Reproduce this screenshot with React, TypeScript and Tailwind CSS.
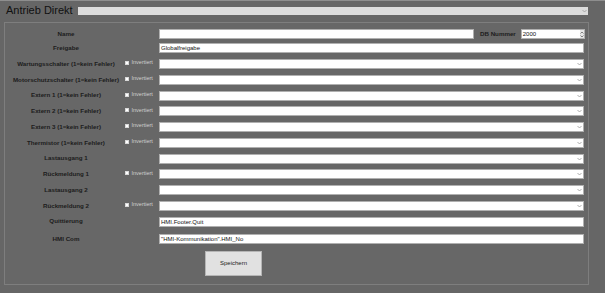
const rows = [
  { label: "Wartungsschalter (1=kein Fehler)", invert: true },
  { label: "Motorschutzschalter (1=kein Fehler)", invert: true },
  { label: "Extern 1 (1=kein Fehler)", invert: true },
  { label: "Extern 2 (1=kein Fehler)", invert: true },
  { label: "Extern 3 (1=kein Fehler)", invert: true },
  { label: "Thermistor (1=kein Fehler)", invert: true },
  { label: "Lastausgang 1", invert: false },
  { label: "Rückmeldung 1", invert: true },
  { label: "Lastausgang 2", invert: false },
  { label: "Rückmeldung 2", invert: true },
];

const Chevron = () => (
  <svg width="5" height="4" viewBox="0 0 5 4" className="mr-[1px]">
    <path d="M0.5 1 L2.5 3 L4.5 1" fill="none" stroke="#9a9a9a" strokeWidth="0.8" />
  </svg>
);

const Label = ({ text }: { text: string }) => (
  <div className="ml-[3px] w-[116px] shrink-0 text-center text-[6.2px] font-bold leading-none whitespace-nowrap text-[#1c1c1c]">
    {text}
  </div>
);

const Invert = ({ show }: { show: boolean }) => (
  <div className="flex w-[35px] shrink-0 items-center -mt-[2px]">
    {show && (
      <>
        <span className="ml-[1px] h-[4px] w-[4px] border border-[#d8d8d8] bg-white" />
        <span className="ml-[2.5px] text-[5.5px] leading-none text-[#d0d0d0]">Invertiert</span>
      </>
    )}
  </div>
);

const TextBox = ({ value, w = "w-[425px]" }: { value: string; w?: string }) => (
  <div
    className={`${w} flex h-[10px] shrink-0 items-center border border-[#b0b0b0] bg-white pl-[1px] text-[6px] leading-none text-[#111]`}
  >
    {value}
  </div>
);

const Select = () => (
  <div className="flex h-[10px] w-[425px] shrink-0 items-center justify-end border border-[#b0b0b0] bg-white">
    <Chevron />
  </div>
);

export default function App() {
  return (
    <div className="h-[293px] w-[605px] overflow-hidden border-t border-[#8e8e8e] bg-[#666666] font-['Liberation_Sans',Arial,sans-serif]">
      <div className="flex h-[19px] items-center">
        <span className="ml-[6px] text-[11px] leading-none text-[#111]">Antrieb Direkt</span>
        <div className="ml-[5px] flex h-[8px] w-[510px] items-center justify-end bg-[#dcdcdc]">
          <Chevron />
        </div>
      </div>

      <div className="ml-[4px] mt-[2px] h-[263px] w-[585px] border border-[#7e7e7e] bg-[#676767]">
        <div className="flex flex-col pt-[6px]">
          <div className="flex h-[10px] items-center">
            <Label text="Name" />
            <div className="w-[35px] shrink-0" />
            <TextBox value="" w="w-[315px]" />
            <span className="ml-[6px] text-[6.2px] font-bold leading-none text-[#1c1c1c]">DB Nummer</span>
            <div className="ml-[5px] flex h-[10px] w-[64px] items-center justify-between border border-[#b0b0b0] bg-white pl-[1px] text-[6px] leading-none text-[#111]">
              2000
              <div className="flex h-full w-[4px] flex-col justify-center gap-[1px] bg-[#e6e6e6]">
                <svg width="4" height="3" viewBox="0 0 4 3">
                  <path d="M0.5 2.5 L2 1 L3.5 2.5" fill="none" stroke="#555" strokeWidth="0.7" />
                </svg>
                <svg width="4" height="3" viewBox="0 0 4 3">
                  <path d="M0.5 0.5 L2 2 L3.5 0.5" fill="none" stroke="#555" strokeWidth="0.7" />
                </svg>
              </div>
            </div>
          </div>

          <div className="mt-[4.3px] flex h-[10px] items-center">
            <Label text="Freigabe" />
            <div className="w-[35px] shrink-0" />
            <TextBox value="Globalfreigabe" />
          </div>

          <div className="mt-[5.8px] flex flex-col gap-[5.76px]">
            {rows.map((r) => (
              <div key={r.label} className="flex h-[10px] items-center">
                <Label text={r.label} />
                <Invert show={r.invert} />
                <Select />
              </div>
            ))}
          </div>

          <div className="mt-[5.76px] flex h-[10px] items-center">
            <Label text="Quittierung" />
            <div className="w-[35px] shrink-0" />
            <TextBox value="HMI.Footer.Quit" />
          </div>

          <div className="mt-[7.3px] flex h-[10px] items-center">
            <Label text="HMI Com" />
            <div className="w-[35px] shrink-0" />
            <TextBox value={'"HMI-Kommunikation".HMI_No'} />
          </div>

          <button className="ml-[200px] mt-[7px] flex h-[25px] w-[57px] items-center justify-center border border-[#b5b5b5] bg-[#e1e1e1] text-[6px] leading-none text-[#222]">
            Speichern
          </button>
        </div>
      </div>
    </div>
  );
}
